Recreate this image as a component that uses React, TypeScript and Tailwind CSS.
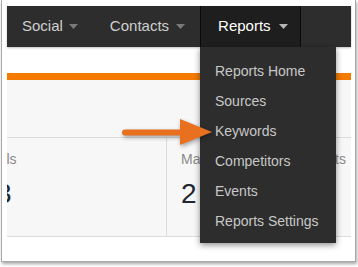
import React from "react";

function Caret({ color }: { color: string }) {
  return (
    <svg width="9" height="5" viewBox="0 0 9 5" className="block">
      <polygon points="0,0 9,0 4.5,5" fill={color} />
    </svg>
  );
}

export default function App() {
  const items = ["Reports Home", "Sources", "Keywords", "Competitors", "Events", "Reports Settings"];
  return (
    <div
      className="w-[358px] h-[267px] bg-white overflow-hidden pl-[1px]"
      style={{ fontFamily: '"Liberation Sans", Arial, sans-serif' }}
    >
      <div className="relative w-[355px] h-[262px] bg-white border-l border-r border-b border-[#a9a9a9] shadow-[1px_2px_3px_rgba(0,0,0,0.35)] pl-[5px] pr-[4px] pt-[6px]">
        {/* nav bar */}
        <div className="relative h-[41px] bg-[#2d2d2d] flex items-stretch shadow-[0_1px_2px_rgba(0,0,0,0.25)] z-10">
          <div className="flex items-center pl-[15px] pr-[16px] gap-[6px]">
            <span className="text-[15px] text-[#cfcfcf]">Social</span>
            <Caret color="#7a7a7a" />
          </div>
          <div className="flex items-center pl-[16px] pr-[15px] gap-[7px]">
            <span className="text-[15px] text-[#cfcfcf]">Contacts</span>
            <Caret color="#7a7a7a" />
          </div>
          <div className="flex items-center w-[101px] pl-[17px] gap-[8px] bg-[#1e1e1e] border-l border-r border-[#0a0a0a]">
            <span className="text-[15px] text-white">Reports</span>
            <Caret color="#b5b5b5" />
          </div>
          {/* dropdown */}
          <div className="absolute left-[193px] top-[41px] w-[136px] h-[196px] bg-[#2d2d2d] shadow-[0_2px_6px_rgba(0,0,0,0.45)] pt-[9px] flex flex-col">
            {items.map((it) => (
              <div key={it} className="h-[30px] flex items-center pl-[15px] text-[14px] text-[#c8c8c8] whitespace-nowrap">
                {it}
              </div>
            ))}
          </div>
        </div>

        {/* spacer */}
        <div className="h-[26px]" />
        {/* orange bar */}
        <div className="h-[7px] bg-[#f57a00]" />
        {/* panel */}
        <div className="h-[157px] bg-[#f7f7f7] border-b border-[#dcdcdc] flex flex-col">
          <div className="h-[58px] border-b border-[#dcdcdc]" />
          <div className="flex flex-1">
            <div className="w-[160px] border-r border-[#dcdcdc] overflow-hidden pt-[13px]">
              <div className="ml-[-27px] text-[14px] leading-[16px] text-[#8a8a8a] whitespace-nowrap">Goals</div>
              <div className="ml-[-11px] mt-[11px] text-[28px] leading-[32px] text-[#1f2733] whitespace-nowrap">3</div>
            </div>
            <div className="flex-1 overflow-hidden pl-[14px] pt-[13px]">
              <div className="text-[14px] leading-[16px] text-[#8a8a8a] whitespace-nowrap">Marketing Ready Contacts</div>
              <div className="mt-[11px] text-[28px] leading-[32px] text-[#1f2733] whitespace-nowrap">2</div>
            </div>
          </div>
        </div>

        {/* orange arrow */}
        <svg
          className="absolute left-[110px] top-[110px] z-20"
          width="110"
          height="45"
          viewBox="0 0 110 45"
          style={{ filter: "drop-shadow(1px 2px 2px rgba(0,0,0,0.35))" }}
        >
          <line x1="13" y1="22.5" x2="72" y2="22.5" stroke="#e8701e" strokeWidth="6" strokeLinecap="round" />
          <polygon points="68,9 100,22 68,35" fill="#e8701e" />
        </svg>
      </div>
    </div>
  );
}
